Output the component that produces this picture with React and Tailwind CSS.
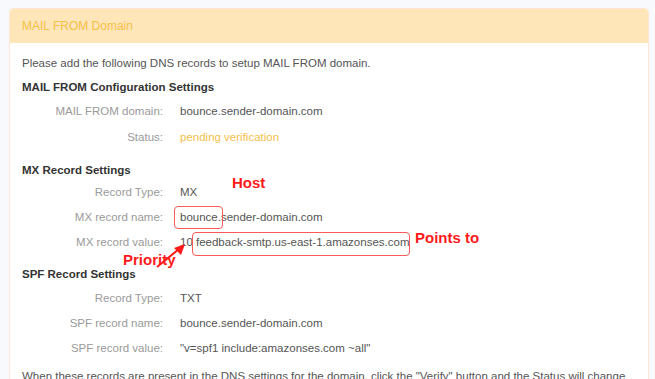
import React from "react";

const font = { fontFamily: '"Liberation Sans", Arial, sans-serif' };

function Row({ label, children, valueClass = "text-[#555]", h = "h-[25px]" }) {
  return (
    <div className={`flex ${h} items-center text-[11.5px]`}>
      <div className="w-[141px] text-right text-[#9a9a9a]">{label}</div>
      <div className={`ml-[17px] ${valueClass}`}>{children}</div>
    </div>
  );
}

function Heading({ children, className = "" }) {
  return (
    <div className={`flex h-[17px] items-center text-[11.5px] font-bold text-[#333] ${className}`}>
      {children}
    </div>
  );
}

export default function App() {
  return (
    <div className="relative h-[379px] w-[655px] overflow-hidden bg-[#f8f9fc] pl-[9px] pr-[6px] pt-[8px]" style={font}>
      <div className="rounded-t-[4px] border border-[#fde6d3] bg-white">
        <div className="flex h-[34px] items-center rounded-t-[4px] bg-[#fee6b8] px-[12px] text-[12px] text-[#f4c04a]">
          MAIL FROM Domain
        </div>
        <div className="px-[12px] pt-[12px] pb-[20px]">
          <div className="flex h-[17px] items-center text-[11.5px] text-[#555]">
            Please add the following DNS records to setup MAIL FROM domain.
          </div>

          <Heading className="mt-[7px]">MAIL FROM Configuration Settings</Heading>
          <div className="mt-[3px]">
            <Row h="h-[26px]" label="MAIL FROM domain:">bounce.sender-domain.com</Row>
            <Row h="h-[26px]" label="Status:" valueClass="text-[#f4c04a]">pending verification</Row>
          </div>

          <Heading className="mt-[11px]">MX Record Settings</Heading>
          <div className="mt-[1px]">
            <Row label="Record Type:">MX</Row>
            <Row label="MX record name:">bounce.sender-domain.com</Row>
            <Row label="MX record value:">10 feedback-smtp.us-east-1.amazonses.com</Row>
          </div>

          <Heading className="mt-[11px]">SPF Record Settings</Heading>
          <div className="mt-[3px]">
            <Row label="Record Type:">TXT</Row>
            <Row label="SPF record name:">bounce.sender-domain.com</Row>
            <Row label="SPF record value:">"v=spf1 include:amazonses.com ~all"</Row>
          </div>

          <div className="mt-[7px] flex h-[17px] items-center text-[11.5px] text-[#555]">
            When these records are present in the DNS settings for the domain, click the "Verify" button and the Status will change
          </div>
        </div>
      </div>

      {/* annotations */}
      <div className="absolute left-[174px] top-[206px] h-[23px] w-[49px] rounded-[4px] border-[1.5px] border-[#ff5a5a]" />
      <div className="absolute left-[192px] top-[232px] h-[24px] w-[218px] rounded-[4px] border-[1.5px] border-[#ff5a5a]" />
      <div className="absolute left-[232px] top-[172px] text-[15px] font-bold text-[#ff1a1a]">Host</div>
      <div className="absolute left-[415px] top-[227px] text-[15px] font-bold text-[#ff1a1a]">Points to</div>
      <div className="absolute left-[123px] top-[249px] text-[15px] font-bold text-[#ff1a1a]">Priority</div>
      <svg className="absolute left-0 top-0" width="655" height="379" style={{ pointerEvents: "none" }}>
        <line x1="157" y1="267" x2="179" y2="249" stroke="#ff1a1a" strokeWidth="2" />
        <polygon points="185,244 174,248 181,255" fill="#ff1a1a" />
      </svg>
    </div>
  );
}
